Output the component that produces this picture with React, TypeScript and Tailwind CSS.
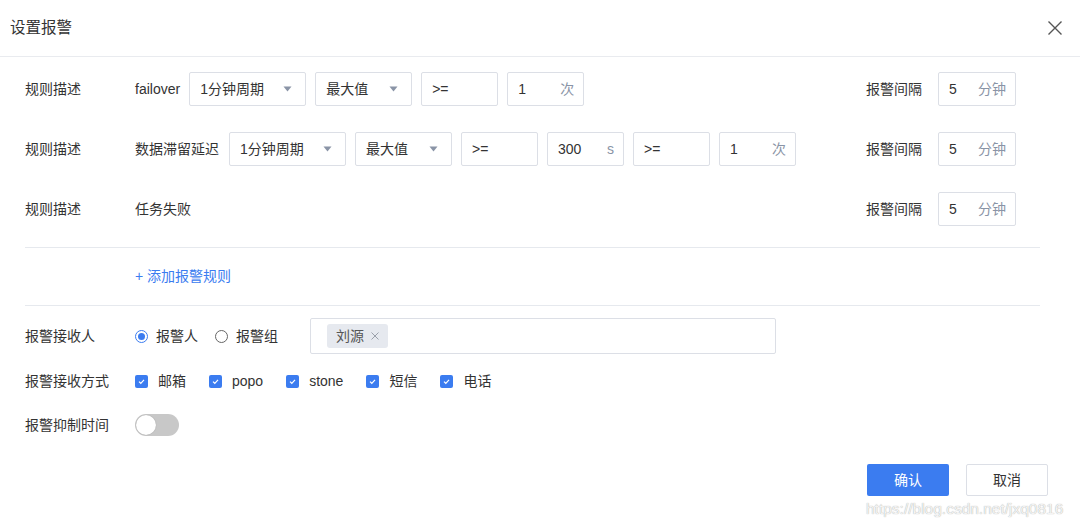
import React from 'react'

const font = { fontFamily: '"Liberation Sans", "Noto Sans CJK SC", sans-serif' }

const Caret = () => (
  <svg width="9" height="6" viewBox="0 0 9 6" className="shrink-0">
    <path d="M0.5 0.5 L8.5 0.5 L4.5 5.5 Z" fill="#8a94a6" />
  </svg>
)

const Select = ({ value, w }: { value: string; w: string }) => (
  <div className={`${w} h-[34px] flex items-center justify-between pl-[10px] pr-[13px] border border-[#dcdfe6] rounded-[2px] text-[14px] text-[#333]`}>
    <span>{value}</span>
    <Caret />
  </div>
)

const Input = ({ value, unit, w = 'w-[77px]' }: { value: string; unit?: string; w?: string }) => (
  <div className={`${w} h-[34px] flex items-center justify-between pl-[10px] pr-[9px] border border-[#dcdfe6] rounded-[2px] text-[14px] text-[#333]`}>
    <span>{value}</span>
    {unit && <span className="text-[#8a94a6]">{unit}</span>}
  </div>
)

const Interval = () => (
  <div className="ml-auto mr-[24px] flex items-center gap-[16px]">
    <span className="text-[14px] text-[#333]">报警间隔</span>
    <Input value="5" unit="分钟" w="w-[78px]" />
  </div>
)

const Check = ({ label }: { label: string }) => (
  <div className="flex items-center gap-[10px]">
    <span className="w-[13px] h-[13px] rounded-[2px] bg-[#3b7cf0] flex items-center justify-center">
      <svg width="9" height="9" viewBox="0 0 9 9">
        <path d="M2 4.6 L3.8 6.3 L7 2.8" fill="none" stroke="white" strokeWidth="1.2" />
      </svg>
    </span>
    <span className="text-[14px] text-[#333]">{label}</span>
  </div>
)

export default function App() {
  return (
    <div className="relative w-[1080px] h-[521px] bg-white overflow-hidden" style={font}>
      <div className="h-[57px] flex items-center justify-between pl-[10px] pr-[16px] border-b border-[#e9ebef]">
        <span className="text-[15.5px] text-[#333]">设置报警</span>
        <svg width="16" height="16" viewBox="0 0 16 16" className="mr-[1px]">
          <path d="M1.5 1.5 L14.5 14.5 M14.5 1.5 L1.5 14.5" stroke="#555" strokeWidth="1.4" />
        </svg>
      </div>

      <div className="pl-[25px] pr-[40px]">
        <div className="pt-[15px] flex flex-col gap-[26px]">
          <div className="flex items-center">
            <span className="w-[110px] text-[14px] text-[#333]">规则描述</span>
            <div className="flex items-center gap-[9px]">
              <span className="text-[14px] text-[#333]">failover</span>
              <Select value="1分钟周期" w="w-[117px]" />
              <Select value="最大值" w="w-[97px]" />
              <Input value=">=" />
              <Input value="1" unit="次" />
            </div>
            <Interval />
          </div>
          <div className="flex items-center">
            <span className="w-[110px] text-[14px] text-[#333]">规则描述</span>
            <div className="flex items-center gap-[9px]">
              <span className="text-[14px] text-[#333] mr-[1px]">数据滞留延迟</span>
              <Select value="1分钟周期" w="w-[117px]" />
              <Select value="最大值" w="w-[97px]" />
              <Input value=">=" />
              <Input value="300" unit="s" />
              <Input value=">=" />
              <Input value="1" unit="次" />
            </div>
            <Interval />
          </div>
          <div className="flex items-center">
            <span className="w-[110px] text-[14px] text-[#333]">规则描述</span>
            <span className="text-[14px] text-[#333]">任务失败</span>
            <Interval />
          </div>
        </div>

        <div className="mt-[21px] border-t border-[#e6e9ee] h-[58px] flex items-center pl-[110px]">
          <span className="text-[14px] text-[#3b7cf0]">+ 添加报警规则</span>
        </div>

        <div className="border-t border-[#e6e9ee] pt-[12px] flex flex-col">
          <div className="flex items-center h-[36px]">
            <span className="w-[110px] text-[14px] text-[#333]">报警接收人</span>
            <div className="flex items-center gap-[8px]">
              <span className="w-[13px] h-[13px] rounded-full border border-[#3b7cf0] flex items-center justify-center">
                <span className="w-[7px] h-[7px] rounded-full bg-[#3b7cf0]" />
              </span>
              <span className="text-[14px] text-[#333]">报警人</span>
              <span className="ml-[9px] w-[13px] h-[13px] rounded-full border border-[#666]" />
              <span className="text-[14px] text-[#333]">报警组</span>
            </div>
            <div className="ml-[32px] w-[466px] h-[36px] border border-[#dcdfe6] rounded-[2px] flex items-center pl-[16px]">
              <span className="h-[24px] px-[9px] bg-[#e6e9ef] rounded-[3px] flex items-center gap-[7px] text-[14px] text-[#555]">
                刘源
                <svg width="8" height="8" viewBox="0 0 8 8">
                  <path d="M0.5 0.5 L7.5 7.5 M7.5 0.5 L0.5 7.5" stroke="#9aa0aa" strokeWidth="1" />
                </svg>
              </span>
            </div>
          </div>
          <div className="mt-[9px] flex items-center h-[36px]">
            <span className="w-[110px] text-[14px] text-[#333]">报警接收方式</span>
            <div className="flex items-center gap-[23px]">
              <Check label="邮箱" />
              <Check label="popo" />
              <Check label="stone" />
              <Check label="短信" />
              <Check label="电话" />
            </div>
          </div>
          <div className="mt-[8px] flex items-center h-[36px]">
            <span className="w-[110px] text-[14px] text-[#333]">报警抑制时间</span>
            <span className="w-[44px] h-[22px] rounded-full bg-[#c8c8c8] flex items-center pl-[1px]">
              <span className="w-[20px] h-[20px] rounded-full bg-white shadow-[0_0_1px_rgba(0,0,0,0.3)]" />
            </span>
          </div>
        </div>
      </div>

      <div className="mt-[21px] flex justify-end gap-[17px] pr-[32px]">
        <button className="w-[82px] h-[32px] rounded-[2px] bg-[#3b7cf0] text-white text-[14px]">确认</button>
        <button className="w-[82px] h-[32px] rounded-[2px] border border-[#dcdfe6] bg-white text-[#333] text-[14px]">取消</button>
      </div>

      <span className="absolute left-[866px] top-[497px] text-[15.5px] text-[#f4f4f4] [text-shadow:0_0_1px_#999]">
        https://blog.csdn.net/jxq0816
      </span>
    </div>
  )
}
